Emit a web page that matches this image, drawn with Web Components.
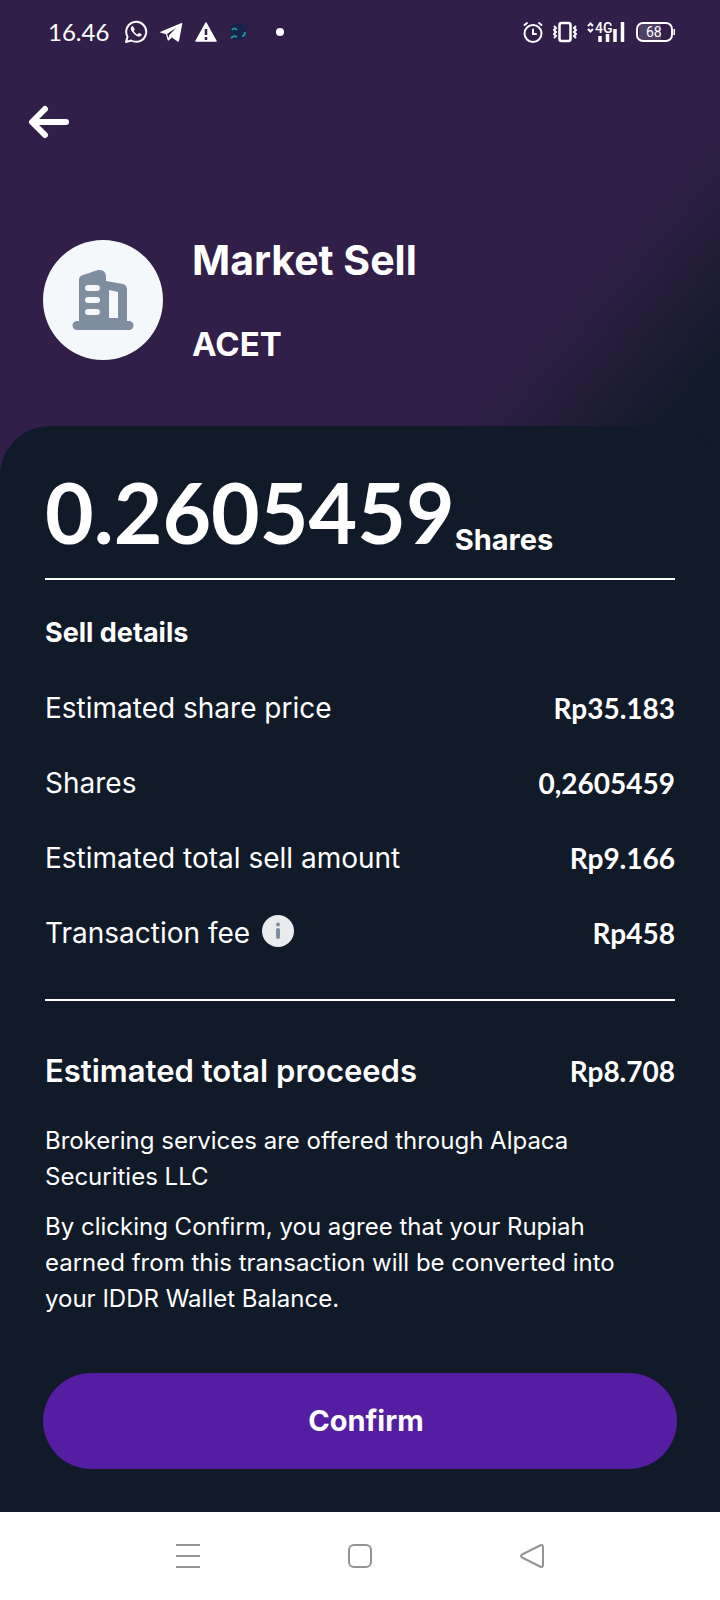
<!DOCTYPE html>
<html lang="en">
<head>
<meta charset="utf-8">
<meta name="viewport" content="width=device-width, initial-scale=1">
<title>Market Sell</title>
<style>
  body { margin: 0; background: #111a28; color: #fff; font-family: Inter, "Open Sans", sans-serif; }
</style>
</head>
<body>
<sell-screen></sell-screen>

<script>
const define = (name, html) => {
  const template = document.createElement('template');
  template.innerHTML = html;
  customElements.define(name, class extends HTMLElement {
    constructor() {
      super();
      this.attachShadow({ mode: 'open' }).append(template.content.cloneNode(true));
    }
  });
};

define('status-bar', `
<style>
  :host { display: flex; align-items: center; justify-content: space-between; height: 64px; padding: 0 45px 0 48px; font-family: Lato, sans-serif; }
  div { display: flex; align-items: center; }
  .left { gap: 11px; }
  .right { gap: 10px; }
  time { font-size: 24px; line-height: 32px; margin-right: 4px; }
  svg { display: block; }
  .net { font: 500 14px/14px Roboto, sans-serif; }
  .net, .lvl { fill: #fff; stroke: none; }
  .lvl { font: 400 14px/16px Roboto, sans-serif; }
</style>
<div class="left">
  <time>16.46</time>
  <svg width="24" height="24" viewBox="0 0 24 24" fill="none" stroke="#fff" stroke-width="2" aria-label="WhatsApp">
    <path d="M2 22l1.500-5.300a10 10 0 1 1 3.800 3.800z" stroke-linejoin="round"/>
    <path d="M8.700 6.200c-.5-.3-1.700.4-1.900 1.700-.3 3.200 5.500 9.100 9.100 8.600 1.300-.2 2-1.300 1.800-1.900-.2-.5-2.300-1.600-2.800-1.500-.5.200-1 1.300-1.500 1.300-1.300-.3-3.300-2.300-3.700-3.400.2-.6 1-.9 1-1.500-.1-.700-1.400-3-2-3.300z" fill="#fff" stroke="none"/>
  </svg>
  <svg width="24" height="24" viewBox="0 0 24 24" fill="#fff" aria-label="Telegram">
    <path d="M1 12 22.500 3c.6-.2.9.1.8.7L20 21c-.2.8-.8 1-1.500.6l-5.600-4.200-3.100 3c-.5.4-1 .2-1.100-.4L7 14.200 1.200 12.600c-.4-.1-.4-.4-.2-.6z"/>
    <path d="M8 14 17 8 10.300 15 9.700 18z" fill="#321f49"/>
  </svg>
  <svg width="24" height="24" viewBox="0 0 24 24" aria-label="Warning">
    <path d="M12 3 22 21H2z" fill="#fff" stroke="#fff" stroke-width="1.500" stroke-linejoin="round"/>
    <path d="M12 9v6M12 17v3" stroke="#321f49" stroke-width="2.500"/>
  </svg>
  <svg width="20" height="24" viewBox="0 0 20 24" aria-label="App notification">
    <path d="M3 4h9l2 2 5-2-2 5v6l-4 5H5l-4-5V9z" fill="#172449"/>
    <path d="M3 10q2-3 5 0M2 18q3-3 6-1M13 16q3 0 3-4" fill="none" stroke="#22909c" stroke-width="2"/>
  </svg>
  <svg width="24" height="24" viewBox="0 0 24 24" style="margin-left:10px" aria-hidden="true"><circle cx="10" cy="12" r="4" fill="#fff"/></svg>
</div>
<div class="right">
  <svg width="20" height="24" viewBox="0 0 20 24" fill="none" stroke="#fff" stroke-width="2" stroke-linecap="round" aria-label="Alarm">
    <circle cx="10" cy="13.500" r="8.500"/><path d="M1.500 5 4 3M16 3l2.500 2M10 9.500V14h3"/>
  </svg>
  <svg width="24" height="24" viewBox="0 0 24 24" fill="none" stroke="#fff" stroke-width="2" aria-label="Vibrate">
    <rect x="6.500" y="3" width="11" height="18" rx="2" stroke-width="2.500"/>
    <path d="M1 6l2 2-2 2 2 2-2 2 2 2-2 2M23 6l-2 2 2 2-2 2 2 2-2 2 2 2" stroke-width="2"/>
  </svg>
  <svg width="38" height="24" viewBox="0 0 38 24" fill="none" stroke="#fff" stroke-width="2" aria-label="Mobile signal">
    <path d="M1 6 3.500 3.500 6 6M1 9l2.500 2.500L6 9"/>
    <text class="net" x="8" y="13">4G</text>
    <path d="M13 16v6M20.500 14v8M28 9v13M35.500 2v20" stroke-width="3.500"/>
  </svg>
  <svg width="40" height="24" viewBox="0 0 40 24" fill="none" stroke="#fff" stroke-width="2" aria-label="Battery">
    <path d="M7 4h19v16H7q-3-1-3-4V8q0-3 3-4z" fill="#fff" fill-opacity=".15" stroke="none"/>
    <rect x="2" y="3" width="35" height="18" rx="6"/><path d="M39.500 9v6"/>
    <text class="lvl" x="11" y="17">68</text>
  </svg>
</div>`);

define('back-button', `
<style>
  :host { display: block; padding: 36px 24px; }
  button { display: block; padding: 4px; border: 0; background: none; cursor: pointer; }
  svg { display: block; }
</style>
<button type="button" aria-label="Back">
  <svg width="44" height="36" viewBox="0 0 44 36" fill="none" stroke="#fff" stroke-width="6" stroke-linecap="round" stroke-linejoin="round">
    <path d="M17 5 4 18 17 31M5 18h33"/>
  </svg>
</button>`);

define('stock-heading', `
<style>
  :host { display: flex; align-items: center; gap: 29px; padding: 56px 43px 0; }
  .logo { flex: none; width: 120px; height: 120px; border-radius: 50%; background: #f5f8fa; }
  h1, h2 { margin: 0; font-weight: 700; }
  h1 { font-size: 41px; line-height: 48px; }
  h2 { margin-top: 40px; font-size: 33px; line-height: 40px; }
</style>
<svg class="logo" viewBox="0 0 120 120" aria-hidden="true">
  <path d="M34 81h2V40q0-4 4-5l15-5q8-1 8 7v4l17 3q4 1 4 6v31h2a4.500 4.500 0 0 1 0 9H34a4.500 4.500 0 0 1 0-9z" fill="#7e8d9f"/>
  <path d="M66 50l9 2v26h-9z" fill="#f5f8fa"/>
  <path d="M45 48h9M45 60h9M45 72h9" stroke="#f5f8fa" stroke-width="6" stroke-linecap="round"/>
</svg>
<div><h1><slot></slot></h1><h2><slot name="ticker"></slot></h2></div>`);

define('share-amount', `
<style>
  :host { display: flex; align-items: flex-end; padding: 38px 0 18px; border-bottom: 2px solid #fff; }
  .value { font: 700 84px/96px Lato, sans-serif; }
  .unit { font-size: 29px; font-weight: 700; line-height: 40px; }
</style>
<span class="value"><slot></slot></span><span class="unit"><slot name="unit"></slot></span>`);

define('detail-row', `
<style>
  :host { display: flex; align-items: center; justify-content: space-between; gap: 16px; min-height: 75px; font-size: 28px; line-height: 36px; }
  :host([total]) .label { font-size: 31px; font-weight: 600; }
  .label { display: flex; align-items: center; gap: 12px; }
  .value { font-family: Lato, sans-serif; font-weight: 700; }
</style>
<span class="label"><slot></slot></span><span class="value"><slot name="value"></slot></span>`);

define('info-button', `
<style>
  :host { display: block; }
  button { display: block; padding: 0 0 4px; border: 0; background: none; cursor: pointer; }
  svg { display: block; }
</style>
<button type="button" aria-label="About the transaction fee">
  <svg width="32" height="32" viewBox="0 0 32 32"><circle cx="16" cy="16" r="16" fill="#e9ebef"/>
    <circle cx="16" cy="9.500" r="2" fill="#7e8d9f"/><path d="M16 15v7" stroke="#7e8d9f" stroke-width="4" stroke-linecap="round"/></svg>
</button>`);

define('confirm-button', `
<style>
  :host { display: block; padding: 0 43px 43px; }
  button { display: block; width: 100%; padding: 28px 28px 28px 40px; border: 0; border-radius: 48px; background: #551da1; color: #fff; font: 700 29px/40px Inter, sans-serif; cursor: pointer; }
</style>
<button type="button"><slot></slot></button>`);

define('system-nav', `
<style>
  :host { display: block; background: #fff; }
  nav { display: flex; justify-content: center; gap: 124px; padding: 20px 0; }
  button { display: block; padding: 10px; border: 0; background: none; cursor: pointer; }
  svg { display: block; fill: none; stroke: #949494; stroke-width: 2; stroke-linejoin: round; }
</style>
<nav aria-label="System">
  <button type="button" aria-label="Recent apps"><svg width="28" height="28" viewBox="0 0 28 28"><path d="M2 3h24M2 14h24M2 25h24"/></svg></button>
  <button type="button" aria-label="Home"><svg width="28" height="28" viewBox="0 0 28 28"><rect x="3" y="3" width="22" height="22" rx="5"/></svg></button>
  <button type="button" aria-label="Back"><svg width="28" height="28" viewBox="0 0 28 28"><path d="M4 12.500 22 3.500Q25 2 25 5v18q0 3-3 1.500L4 15.500q-2-1.500 0-3z"/></svg></button>
</nav>`);

define('sell-screen', `
<style>
  :host { display: flex; flex-direction: column; min-height: 100vh; }
  header { padding-bottom: 122px; background: linear-gradient(131deg, #321f49 71%, #231d39 81%, #111a27 91%); }
  main { flex: 1; display: flex; flex-direction: column; margin-top: -60px; border-radius: 50px 50px 0 0; background: #111a28; }
  section { padding: 0 45px; }
  h3 { margin: 0; padding: 35px 0 0; font-size: 27px; font-weight: 700; line-height: 36px; }
  hr { margin: 29px 0 32px; border: 0; border-top: 2px solid #fff; }
  .rows { padding-top: 19px; }
  p { margin: 0 0 14px; font-size: 24px; line-height: 36px; }
  .notes { padding: 15px 90px 0 45px; }
  confirm-button { margin-top: auto; }
</style>
<header>
  <status-bar></status-bar>
  <back-button></back-button>
  <stock-heading>Market Sell<span slot="ticker">ACET</span></stock-heading>
</header>
<main>
  <section>
    <share-amount>0.2605459<span slot="unit">Shares</span></share-amount>
    <h3>Sell details</h3>
    <div class="rows">
      <detail-row>Estimated share price<span slot="value">Rp35.183</span></detail-row>
      <detail-row>Shares<span slot="value">0,2605459</span></detail-row>
      <detail-row>Estimated total sell amount<span slot="value">Rp9.166</span></detail-row>
      <detail-row>Transaction fee<info-button></info-button><span slot="value">Rp458</span></detail-row>
    </div>
    <hr>
    <detail-row total>Estimated total proceeds<span slot="value">Rp8.708</span></detail-row>
  </section>
  <section class="notes">
    <p>Brokering services are offered through Alpaca Securities LLC</p>
    <p>By clicking Confirm, you agree that your Rupiah earned from this transaction will be converted into your IDDR Wallet Balance.</p>
  </section>
  <confirm-button>Confirm</confirm-button>
</main>
<system-nav></system-nav>`);
</script>
</body>
</html>
